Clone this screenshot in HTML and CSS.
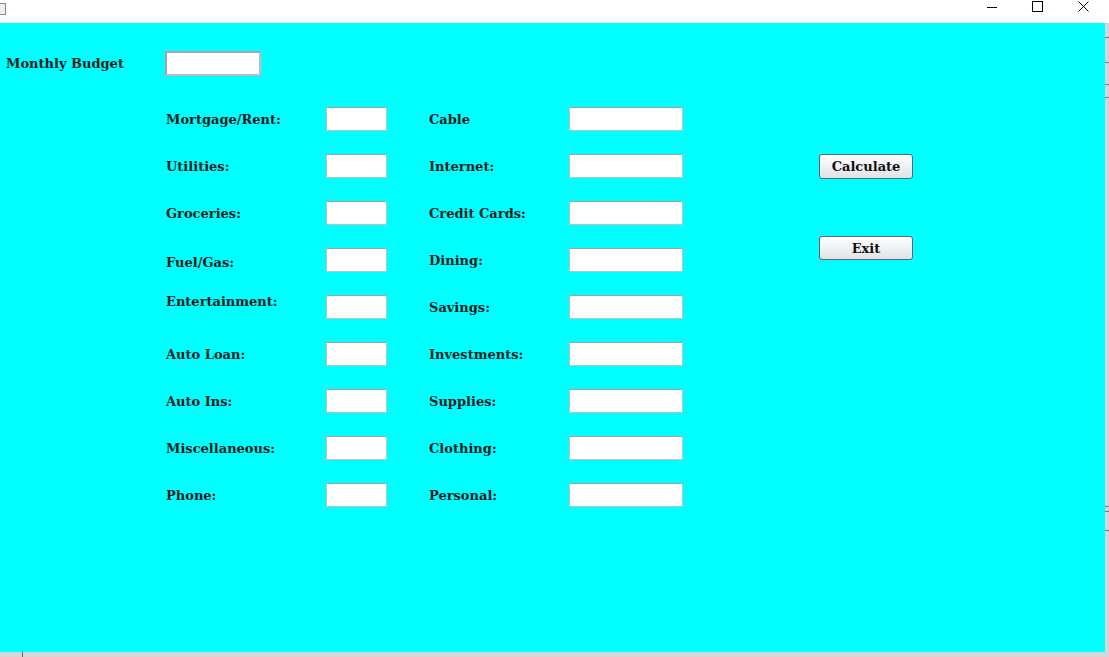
FILE: index.html
```html
<!DOCTYPE html>
<html>
<head>
<meta charset="utf-8">
<link rel="stylesheet" href="styles.css">
</head>
<body>
<div class="titlebar">
  <div class="appicon"></div>
  <div class="controls">
    <svg class="ctl" width="46" height="22" viewBox="0 0 46 22"><line x1="18" y1="7.5" x2="28" y2="7.5" stroke="#000" stroke-width="1"/></svg>
    <svg class="ctl" width="46" height="22" viewBox="0 0 46 22"><rect x="17.5" y="1.5" width="10" height="10" fill="none" stroke="#000" stroke-width="1"/></svg>
    <svg class="ctl" width="46" height="22" viewBox="0 0 46 22"><path d="M17.5 1.5 L27.5 11.5 M27.5 1.5 L17.5 11.5" stroke="#000" stroke-width="1"/></svg>
  </div>
</div>
<div class="main">
  <div class="content">
    <div class="budget-row">
      <span class="label budget-label">Monthly Budget</span>
      <input class="box box-budget" type="text">
    </div>
    <div class="form">
      <div class="grid">
        <span class="label">Mortgage/Rent:</span><input class="box box-s" type="text">
        <span class="label">Cable</span><input class="box box-l" type="text">

        <span class="label">Utilities:</span><input class="box box-s" type="text">
        <span class="label">Internet:</span><input class="box box-l" type="text">

        <span class="label">Groceries:</span><input class="box box-s" type="text">
        <span class="label">Credit Cards:</span><input class="box box-l" type="text">

        <span class="label low">Fuel/Gas:</span><input class="box box-s" type="text">
        <span class="label">Dining:</span><input class="box box-l" type="text">

        <span class="label high">Entertainment:</span><input class="box box-s" type="text">
        <span class="label">Savings:</span><input class="box box-l" type="text">

        <span class="label">Auto Loan:</span><input class="box box-s" type="text">
        <span class="label">Investments:</span><input class="box box-l" type="text">

        <span class="label">Auto Ins:</span><input class="box box-s" type="text">
        <span class="label">Supplies:</span><input class="box box-l" type="text">

        <span class="label">Miscellaneous:</span><input class="box box-s" type="text">
        <span class="label">Clothing:</span><input class="box box-l" type="text">

        <span class="label">Phone:</span><input class="box box-s" type="text">
        <span class="label">Personal:</span><input class="box box-l" type="text">
      </div>
      <div class="buttons">
        <button class="btn btn-calc">Calculate</button>
        <button class="btn btn-exit">Exit</button>
      </div>
    </div>
  </div>
  <div class="rstrip">
    <div class="tick t1"></div>
    <div class="tick t2"></div>
    <div class="tick t3"></div>
    <div class="tick t4"></div>
    <div class="tick t5"></div>
    <div class="tick t6"></div>
    <div class="tick t7"></div>
  </div>
</div>
<div class="bstrip"><div class="btick"></div></div>
</body>
</html>
```

FILE: styles.css
```css
html, body {
  margin: 0;
  padding: 0;
  width: 1109px;
  height: 657px;
  overflow: hidden;
  background: #ffffff;
  font-family: "DejaVu Serif", "Liberation Serif", serif;
}

.titlebar {
  height: 23px;
  background: #ffffff;
  display: flex;
  justify-content: space-between;
  align-items: flex-start;
}

.appicon {
  width: 5px;
  height: 10px;
  margin-top: 3px;
  border: 1px solid #8a8a8a;
  border-left: none;
  background: #e8eef4;
}

.controls {
  display: flex;
  margin-right: 2px;
}

.ctl {
  display: block;
}

.main {
  display: flex;
  height: 629px;
}

.content {
  flex: 1;
  background: #00ffff;
}

.rstrip {
  width: 4px;
  background: #d6d6d6;
  position: relative;
}

.tick {
  position: absolute;
  left: 0;
  width: 4px;
  height: 1px;
  background: #777;
}
.t1 { top: 14px; }
.t2 { top: 39px; }
.t3 { top: 61px; }
.t4 { top: 74px; }
.t5 { top: 483px; }
.t6 { top: 488px; }
.t7 { top: 507px; }

.bstrip {
  height: 5px;
  background: #d6d6d6;
  position: relative;
}
.btick {
  position: absolute;
  left: 22px;
  top: 0;
  width: 1px;
  height: 5px;
  background: #666;
}

.label {
  font-weight: bold;
  font-size: 13px;
  color: #0c1c1c;
  white-space: nowrap;
}

.budget-row {
  display: flex;
  align-items: center;
  padding-top: 28px;
  padding-left: 6px;
}

.budget-label {
  width: 159px;
}

.box {
  box-sizing: border-box;
  margin: 0;
  padding: 0;
  background: #ffffff;
  border: 1px solid #b9c2c6;
  border-top-color: #9aa4a8;
  height: 24px;
  font: inherit;
  outline: none;
}

.box-budget {
  width: 96px;
  height: 25px;
  border: 2px solid #b3aab8;
  border-color: #a9a1b3 #c0b8c8 #c0b8c8 #a9a1b3;
}

.box-s { width: 61px; }
.box-l { width: 114px; }

.form {
  display: flex;
  align-items: flex-start;
  padding-left: 166px;
  padding-top: 31px;
}

.grid {
  display: grid;
  grid-template-columns: 160px 61px 42px 140px 114px;
  grid-auto-rows: 24px;
  row-gap: 23px;
  align-items: center;
}

.grid .box-s { grid-column: 2; }
.grid .label:nth-child(4n+3) { grid-column: 4; }
.grid .box-l { grid-column: 5; }

.label.low {
  position: relative;
  top: 2px;
}
.label.high {
  position: relative;
  top: -6px;
}

.buttons {
  display: flex;
  flex-direction: column;
  margin-left: 136px;
  margin-top: 47px;
}

.btn {
  box-sizing: border-box;
  width: 94px;
  height: 25px;
  border: 1px solid #5a6670;
  border-radius: 3px;
  background: linear-gradient(to bottom, #ffffff 0%, #f1f3f5 45%, #dfe2e6 100%);
  font-family: "DejaVu Serif", "Liberation Serif", serif;
  font-weight: bold;
  font-size: 13px;
  color: #111;
  padding: 0;
}

.btn-exit {
  margin-top: 57px;
  height: 24px;
}
```
